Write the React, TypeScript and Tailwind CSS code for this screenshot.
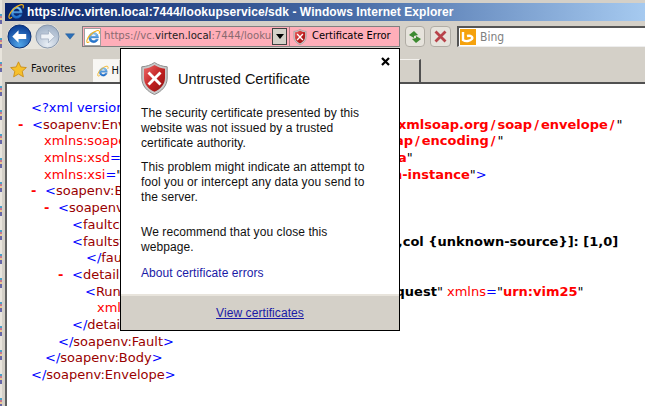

import React from "react";

const IeLogo = ({ size = 16, className = "" }: { size?: number; className?: string }) => (
  <svg width={size} height={size} viewBox="0 0 24 24" className={className}>
    <defs>
      <linearGradient id="iee" x1="0" y1="0" x2="0" y2="1">
        <stop offset="0" stopColor="#8fd0f5" />
        <stop offset="1" stopColor="#1467c8" />
      </linearGradient>
    </defs>
    <path d="M21.5 13.8H8.6c.2 2.6 2 4.2 4.4 4.2 1.8 0 3.2-.8 4-2.2h4.2c-1.2 3.600-4.400 5.900-8.200 5.900-4.900 0-8.300-3.700-8.300-8.700 0-5 3.700-8.900 8.600-8.900 5.100 0 8.300 4.100 8.200 9.700zM8.700 10.700h8.500c-.2-2.200-1.900-3.700-4.200-3.700-2.300 0-3.900 1.500-4.300 3.700z" fill="url(#iee)" stroke="#0b4fa8" strokeWidth=".5" />
    <path d="M6 20C2 23 .5 21 2 16.500 4 10.500 12 3 18.500 1.200 22.500.2 24 2 22.500 6.500" fill="none" stroke="#f2b21b" strokeWidth="1.800" />
  </svg>
);

const Shield = ({ w, h }: { w: number; h: number }) => (
  <svg width={w} height={h} viewBox="0 0 27 33" className="shrink-0">
    <defs>
      <linearGradient id="shr" x1="0" y1="0" x2="1" y2="1">
        <stop offset="0" stopColor="#ee6b6b" />
        <stop offset="0.55" stopColor="#c01f1f" />
        <stop offset="1" stopColor="#8c1414" />
      </linearGradient>
    </defs>
    <path d="M13.500 .5C10 3 5.500 4.500 .8 4.800V16c0 8 5.700 13.500 12.700 16.500C20.500 29.500 26.200 24 26.200 16V4.800C21.500 4.500 17 3 13.500 .5z" fill="#c9c9c9" stroke="#8e8e8e" />
    <path d="M13.500 3C10.500 5 7 6.300 3 6.700V16c0 6.500 4.600 11 10.500 13.800C19.400 27 24 22.500 24 16V6.700C20 6.300 16.500 5 13.500 3z" fill="url(#shr)" />
    <path d="M8.500 10.500l5 5 5-5 2 2-5 5 5 5-2 2-5-5-5 5-2-2 5-5-5-5z" fill="#fff" transform="translate(0 -1)" />
  </svg>
);

const NavButton = ({ on }: { on: boolean }) => (
  <svg width="25" height="25" viewBox="0 0 26 26">
    <defs>
      <radialGradient id="nb1" cx="0.5" cy="0.85" r="0.8">
        <stop offset="0" stopColor="#4fa4e8" />
        <stop offset="1" stopColor="#0c3f96" />
      </radialGradient>
      <radialGradient id="nb2" cx="0.5" cy="0.85" r="0.8">
        <stop offset="0" stopColor="#e8eef5" />
        <stop offset="1" stopColor="#9fb0c6" />
      </radialGradient>
    </defs>
    <circle cx="13" cy="13" r="12" fill={on ? "url(#nb1)" : "url(#nb2)"} stroke={on ? "#0a2f73" : "#8595aa"} />
    {on ? (
      <path d="M5.500 13l6.500-6.500v4h8v5h-8v4z" fill="#fff" />
    ) : (
      <path d="M20.500 13L14 6.500v4H6v5h8v4z" fill="#eef2f7" stroke="#8a9ab0" strokeWidth=".6" />
    )}
  </svg>
);

const Star = () => (
  <svg width="17" height="17" viewBox="0 0 16 16">
    <path d="M8 .8l2.200 4.800 5.200.6-3.900 3.500 1.100 5.200L8 12.300l-4.600 2.600 1.100-5.200L.6 6.200l5.200-.6z" fill="#f6c02c" stroke="#c98a12" strokeWidth=".8" />
  </svg>
);

const B = ({ c }: { c: string }) => <span className="text-[#0000ff]">{c}</span>;
const N = ({ c }: { c: string }) => <span className="text-[#990000]">{c}</span>;
const A = ({ c }: { c: string }) => <span className="text-[#ff0000]">{c}</span>;
const V = ({ c, className = "" }: { c: string; className?: string }) => (
  <span className={`font-bold text-[#ff0000] ${className}`}>{c}</span>
);
const S = () => <span className="mx-[2px] font-bold text-[#ff0000]">/</span>;
const T = ({ c, className = "" }: { c: string; className?: string }) => (
  <span className={`font-bold text-black ${className}`}>{c}</span>
);
const Q = () => <span className="text-black">"</span>;

const Row = ({ pad, dash, children }: { pad: string; dash?: string; children: React.ReactNode }) => (
  <div className={`relative h-[16.7px] whitespace-pre leading-[16.700px] ${pad}`}>
    {dash ? <span className={`absolute font-bold text-[#ff0000] ${dash}`}>-</span> : null}
    {children}
  </div>
);

const UI = "font-['DejaVu_Sans_Condensed','Liberation_Sans',sans-serif]";

export default function App() {
  return (
    <div className="relative flex h-[406px] w-[645px] overflow-hidden bg-[#d4d0c8] font-['Liberation_Sans',sans-serif]">
      <div className="h-full w-[2px] shrink-0 bg-[repeating-linear-gradient(to_bottom,#e8e4dc_0px,#e8e4dc_14px,#4aa0c8_14px,#4aa0c8_16px,#c87890_16px,#c87890_18px,#e8c890_18px,#e8c890_20px,#6868a8_20px,#6868a8_24px)]" />
      <div className="flex min-w-0 flex-1 flex-col pl-[3px] pt-[3px]">
        <div className="flex h-[18px] shrink-0 items-center gap-[3px] bg-[linear-gradient(to_right,#0a246a,#4a6ea8_55%,#a6caf0)] pl-[3px]">
          <IeLogo size={16} />
          <span className="whitespace-nowrap text-[12px] font-bold tracking-[0.07px] text-white">
            https://vc.virten.local:7444/lookupservice/sdk - Windows Internet Explorer
          </span>
        </div>

        <div className="flex h-[31px] shrink-0 items-center pl-[2px]">
          <div className="flex items-center gap-[3px] rounded-full bg-[#e6e4de]">
            <NavButton on />
            <NavButton on={false} />
          </div>
          <svg width="10" height="7" viewBox="0 0 11 7" className="ml-[5px]">
            <path d="M.5.5h10L5.500 6.500z" fill="#2a6fb8" stroke="#1b4f8f" strokeWidth=".5" />
          </svg>
          <div className="ml-[7px] flex h-[21px] w-[318px] shrink-0 items-center border border-[#808080] bg-[#ffaeb9]">
            <div className="ml-[1px] flex h-[18px] w-[17px] items-center justify-center border border-[#a0a0a0] bg-white">
              <IeLogo size={14} />
            </div>
            <span className={`ml-[3px] w-[168px] overflow-hidden whitespace-nowrap text-[11.250px] text-[#8a6a70] ${UI}`}>
              https://vc.<span className="text-[#222]">virten.local</span>:7444/lookupservice/sdk
            </span>
            <div className="flex h-[17px] w-[15px] items-center justify-center border border-[#404040] bg-[#d4d0c8]">
              <svg width="8" height="5" viewBox="0 0 8 5"><path d="M0 0h8L4 5z" fill="#000" /></svg>
            </div>
            <div className="ml-[2px] h-full w-[1px] bg-[#b08088]" />
            <div className="ml-[3px] flex items-center gap-[5px]">
              <Shield w={14} h={16} />
              <span className={`whitespace-nowrap text-[11px] text-black ${UI}`}>Certificate Error</span>
            </div>
          </div>
          <div className="ml-[5px] flex h-[21px] w-[20px] items-center justify-center rounded-[4px] border border-[#b0aca4] bg-[#e6e3dc]">
            <svg width="14" height="14" viewBox="0 0 14 14">
              <path d="M6 1L1 5l5 3V6l4-1zM8 13l5-4-5-3v2L4 9z" fill="#3c8a30" />
            </svg>
          </div>
          <div className="ml-[5px] flex h-[21px] w-[21px] items-center justify-center rounded-[4px] border border-[#b0aca4] bg-[#e6e3dc]">
            <svg width="13" height="13" viewBox="0 0 13 13">
              <path d="M1.500 1.500l10 10M11.500 1.500l-10 10" stroke="#b8434a" strokeWidth="2.800" />
            </svg>
          </div>
          <div className="ml-[6px] flex h-[21px] min-w-0 flex-1 items-center border-l-2 border-t-2 border-[#555] border-b-[1px] border-b-[#eee] bg-white">
            <div className="ml-[1px] flex h-[16px] w-[16px] items-center justify-center bg-[#f5a20e]">
              <svg width="14" height="12" viewBox="0 0 14 12">
                <path d="M2 1v8c3 2 7 1 9-1 1-2-1-4-5-3" fill="none" stroke="#fff" strokeWidth="2.400" />
              </svg>
            </div>
            <span className={`ml-[4px] text-[12px] text-[#808080] ${UI}`}>Bing</span>
          </div>
        </div>

        <div className="flex h-[30px] shrink-0 items-end">
          <div className="mb-[4px] flex items-center self-end pl-[5px]">
            <Star />
            <span className={`ml-[4px] w-[58px] text-[11px] text-[#111] ${UI}`}>Favorites</span>
          </div>
          <div className="ml-[-1px] h-[23px] w-[5px] shrink-0" />
          <div className="flex h-[23px] w-[328px] items-center border-r-2 border-[#505050] border-t border-t-[#f4f2ee] bg-[#d4d0c8]">
            <div className="flex h-full w-[26px] items-center gap-[3px] bg-[#f8f7f4] pl-[4px]">
              <IeLogo size={15} />
              <span className={`text-[11px] text-[#111] ${UI}`}>H</span>
            </div>
          </div>
        </div>

        <div className="flex min-h-0 flex-1 flex-col overflow-hidden border-l-2 border-t-2 border-l-[#606060] border-t-[#505050] bg-white pt-[16px] font-['DejaVu_Sans',sans-serif] text-[13px]">
          <Row pad="pl-[24px]"><B c='<?xml version="1.0" encoding="UTF-8" ?>' /></Row>
          <Row pad="pl-[25px]" dash="left-[11px]">
            <B c="<" /><N c="soapenv:Envelope" /> <A c="xmlns:soapenv" /><B c="=" /><Q /><V c="http://schemas." className="mr-[3px]" /><V c="xmlsoap.org" /><S /><V c="soap" /><S /><V c="envelope" /><S /><Q />
          </Row>
          <Row pad="pl-[37px]"><A c="xmlns:soapenc" /><B c="=" /><Q /><V c="http://schemas.xmlsoap.org/so" className="mr-[10px]" /><V c="ap" /><S /><V c="encoding" /><S /><Q /></Row>
          <Row pad="pl-[37px]"><A c="xmlns:xsd" /><B c="=" /><Q /><V c="http://www.w3.org/2001/XMLSchem" className="mr-[9px]" /><V c="a" /><Q /></Row>
          <Row pad="pl-[37px]"><A c="xmlns:xsi" /><B c="=" /><Q /><V c="http://www.w3.org/2001/XMLSchem" className="mr-[9px]" /><V c="a-instance" /><Q /><B c=">" /></Row>
          <Row pad="pl-[38px]" dash="left-[24px]"><B c="<" /><N c="soapenv:Body" /><B c=">" /></Row>
          <Row pad="pl-[51px]" dash="left-[37px]"><B c="<" /><N c="soapenv:Fault" /><B c=">" /></Row>
          <Row pad="pl-[65px]"><B c="<" /><N c="faultcode" /><B c=">" /><T c="ServerFaultCode" /><B c="</" /><N c="faultcode" /><B c=">" /></Row>
          <Row pad="pl-[65px]"><B c="<" /><N c="faultstring" /><B c=">" /><T c="Unexpected EOF " className="mr-[-10px]" /><T c="in prolog at [row" /><T c=",col {unknown-source}]: [1,0]" /></Row>
          <Row pad="pl-[79px]"><B c="</" /><N c="faultstring" /><B c=">" /></Row>
          <Row pad="pl-[65px]" dash="left-[51px]"><B c="<" /><N c="detail" /><B c=">" /></Row>
          <Row pad="pl-[78px]">
            <B c="<" /><N c="RuntimeFaultFault" /> <A c="xsi:type" /><B c="=" /><Q /><V c="InvalidRe" className="mr-[42px]" /><T c="quest" /><Q /> <A c="xmlns" /><B c="=" /><Q /><V c="urn:vim25" /><Q />
          </Row>
          <Row pad="pl-[90px]"><A c="xmlns:xsi" /><B c="=" /><Q /><V c="http://www.w3.org/" /><Q /><B c=" />" /></Row>
          <Row pad="pl-[65px]"><B c="</" /><N c="detail" /><B c=">" /></Row>
          <Row pad="pl-[51px]"><B c="</" /><N c="soapenv:Fault" /><B c=">" /></Row>
          <Row pad="pl-[38px]"><B c="</" /><N c="soapenv:Body" /><B c=">" /></Row>
          <Row pad="pl-[24px]"><B c="</" /><N c="soapenv:Envelope" /><B c=">" /></Row>
        </div>
      </div>

      <div className="absolute left-[120px] top-[48px] flex h-[283px] w-[280px] flex-col border border-black bg-white text-[12px] leading-[15px] tracking-[0.08px] text-[#111]">
        <svg width="9" height="9" viewBox="0 0 9 9" className="absolute right-[9px] top-[8px]">
          <path d="M1 1l7 7M8 1L1 8" stroke="#000" strokeWidth="2.200" />
        </svg>
        <div className="flex flex-1 flex-col pl-[20px] pr-[26px] pt-[13px]">
          <div className="flex items-center gap-[10px]">
            <Shield w={27} h={33} />
            <span className="pt-[1px] text-[14.500px] tracking-normal">Untrusted Certificate</span>
          </div>
          <p className="mt-[11px]">The security certificate presented by this website was not issued by a trusted certificate authority.</p>
          <p className="mt-[9px]">This problem might indicate an attempt to fool you or intercept any data you send to the server.</p>
          <p className="mt-[20px]">We recommend that you close this webpage.</p>
          <a className="mt-[11px] text-[#1a1aa6]">About certificate errors</a>
        </div>
        <div className="flex h-[36px] shrink-0 items-center justify-center border-t-2 border-[#e8e4dc] bg-[#d4d0c8]">
          <a className="text-[#1a1aa6] underline">View certificates</a>
        </div>
      </div>
    </div>
  );
}
